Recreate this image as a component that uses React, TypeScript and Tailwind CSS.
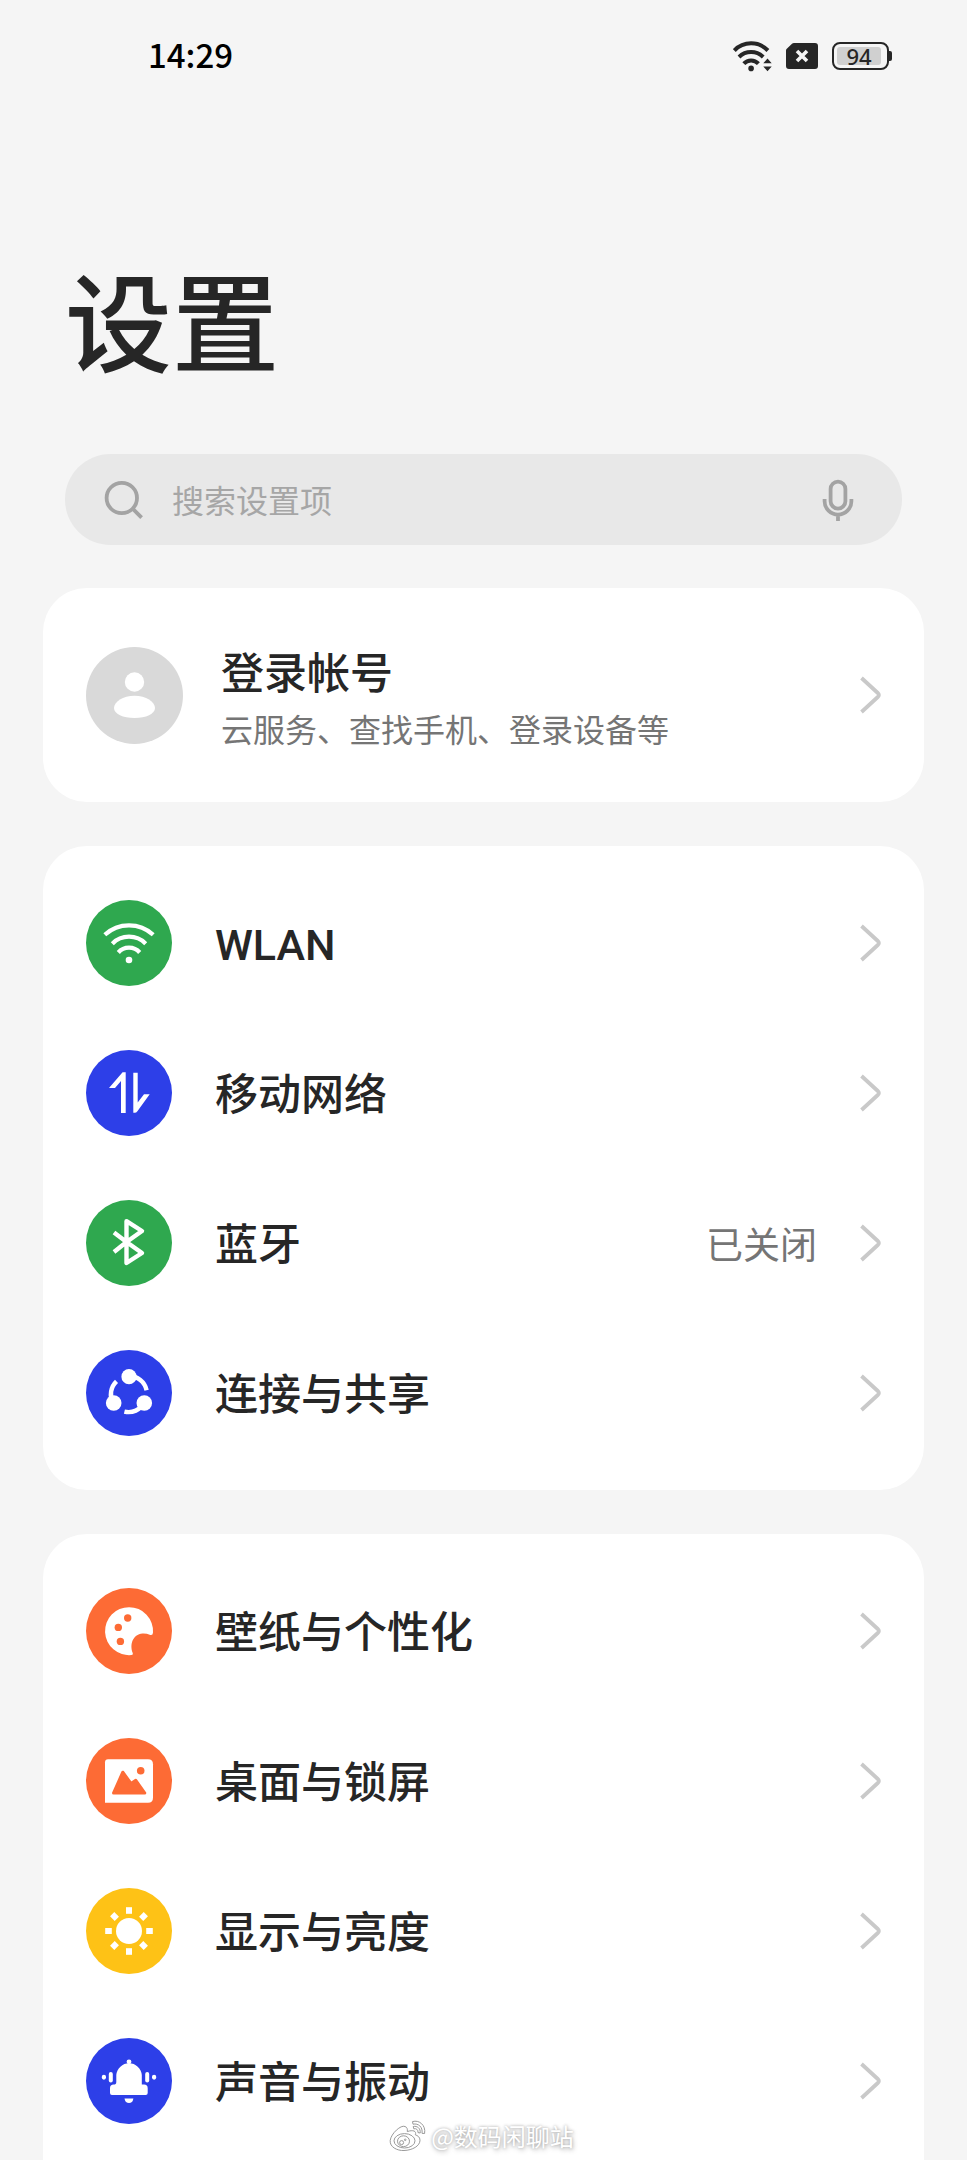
import React from 'react';

interface SettingItem {
    label: string;
    color: string;
    icon: React.ReactNode;
    value?: string;
}

const WifiIcon = () => (
    <g fill="none" stroke="#fff" strokeWidth="4.2">
        <path d="M18.8 34.8A35.8 35.8 0 0 1 67.2 34.8" />
        <path d="M26.3 43.7A23.4 23.4 0 0 1 59.7 43.7" />
        <path d="M32.3 52.5A14.3 14.3 0 0 1 53.7 52.5" />
        <circle cx="43" cy="60" r="3.3" fill="#fff" stroke="none" />
    </g>
);

const MobileDataIcon = () => (
    <g fill="#fff">
        <path d="M36.6 22.3H39.7V63H35V31L29 38H23Z" />
        <path d="M47.3 22.7H51.7V52.5L58 44.3H63.7L51.4 61.2Q50.2 62.7 48.8 62.7H47.3Z" />
    </g>
);

const BluetoothIcon = () => (
    <path
        d="M28 32.5L40.5 42L56 53L40.5 63V21.2L56 31L40.5 42L28 52"
        fill="none"
        stroke="#fff"
        strokeWidth="4.4"
        strokeLinejoin="round"
    />
);

const ShareIcon = () => (
    <g fill="none" stroke="#fff" strokeWidth="4.4">
        <path d="M43 26A18 18 0 0 1 60.6 40.2" />
        <path d="M27 53A18 18 0 0 1 30.5 31.4" />
        <path d="M58.3 53A18 18 0 0 1 38.4 61.6" />
        <g fill="#fff" stroke="none">
            <circle cx="43" cy="26.7" r="7.6" />
            <circle cx="27.7" cy="53" r="7.8" />
            <circle cx="58.3" cy="53" r="7.8" />
        </g>
    </g>
);

const PaletteIcon = () => (
    <g>
        <path
            d="M67 44.5A24 24 0 1 0 45.5 67Q47.4 66.8 46.8 65.3C43.5 57 46.5 46.4 56.5 45.6Q60 45.3 64.4 47Q66.8 47.6 67 44.5Z"
            fill="#fff"
        />
        <g fill="#fd6b35">
            <circle cx="41.7" cy="30" r="3.7" />
            <circle cx="32.3" cy="39.4" r="3.7" />
            <circle cx="34.4" cy="53.4" r="3.7" />
        </g>
    </g>
);

const PictureIcon = () => (
    <g>
        <path d="M22 21.3H62Q67 21.3 67 26.3V59.7Q67 64.7 62 64.7H19V24.3Q19 21.3 22 21.3Z" fill="#fff" />
        <path
            d="M27.5 55L36.8 34.2L45 45.5L49.8 42.3L58.8 55Z"
            fill="#fd6b35"
            stroke="#fd6b35"
            strokeWidth="3"
            strokeLinejoin="round"
        />
        <circle cx="54.7" cy="32.8" r="3.8" fill="#fd6b35" />
    </g>
);

const BrightnessIcon = () => (
    <g fill="#fff">
        <circle cx="43" cy="43" r="13" />
        {[0, 45, 90, 135, 180, 225, 270, 315].map((angle) => (
            <rect key={angle} x="40" y="19.2" width="6" height="6.6" transform={`rotate(${angle} 43 43)`} />
        ))}
    </g>
);

const BellIcon = () => (
    <g fill="#fff">
        <circle cx="43" cy="23.8" r="2.4" />
        <path d="M30.3 37A12.8 12.8 0 0 1 55.8 37V46.6H58Q61.7 46.6 61.7 50.3V55Q61.7 57 59.7 57H26Q24 57 24 55V50.3Q24 46.6 27.7 46.6Q30.3 46.6 30.3 44Z" />
        <path d="M38.5 60.4H47.4Q46.6 65 43 65Q39.4 65 38.5 60.4Z" />
        <rect x="22.8" y="34" width="4" height="10.4" rx="2" />
        <rect x="59.2" y="34" width="4" height="10.4" rx="2" />
        <rect x="15.8" y="36.7" width="4.2" height="5" rx="2.1" />
        <rect x="66" y="36.7" width="4.2" height="5" rx="2.1" />
    </g>
);

const networkItems: SettingItem[] = [
    { label: 'WLAN', color: '#2fa84f', icon: <WifiIcon /> },
    { label: '移动网络', color: '#2d3fe8', icon: <MobileDataIcon /> },
    { label: '蓝牙', color: '#2fa84f', icon: <BluetoothIcon />, value: '已关闭' },
    { label: '连接与共享', color: '#2d3fe8', icon: <ShareIcon /> },
];

const deviceItems: SettingItem[] = [
    { label: '壁纸与个性化', color: '#fd6b35', icon: <PaletteIcon /> },
    { label: '桌面与锁屏', color: '#fd6b35', icon: <PictureIcon /> },
    { label: '显示与亮度', color: '#fec216', icon: <BrightnessIcon /> },
    { label: '声音与振动', color: '#2d3fe8', icon: <BellIcon /> },
];

function Chevron() {
    return (
        <svg width="21" height="38" viewBox="0 0 21 38" fill="none" className="shrink-0">
            <path d="M1.5 2L17.8 17Q20 19 17.8 21L1.5 36" stroke="#c9c9c9" strokeWidth="3.8" />
        </svg>
    );
}

function SettingRow({ item }: { item: SettingItem }) {
    return (
        <li>
            <a href="#" className="flex h-[150px] items-center gap-[43px] px-[43px]">
                <svg width="86" height="86" viewBox="0 0 86 86" className="shrink-0">
                    <circle cx="43" cy="43" r="43" fill={item.color} />
                    {item.icon}
                </svg>
                <span className="flex-1 pt-1 font-['Roboto','Noto_Sans_CJK_SC',sans-serif] text-[43px] font-medium">
                    {item.label}
                </span>
                {item.value && <span className="pt-0.5 text-[37px] text-[#757575]">{item.value}</span>}
                <Chevron />
            </a>
        </li>
    );
}

function StatusBar() {
    return (
        <div className="flex h-28 items-center justify-between pr-[75px] pl-[148px]">
            <time className="pb-1 text-[33px] leading-none font-medium text-black">14:29</time>
            <div className="flex items-center gap-3.5">
                {/* Wifi with traffic arrows */}
                <svg width="39" height="31" viewBox="0 0 39 31" fill="none">
                    <g stroke="#262626" strokeWidth="4">
                        <path d="M1.3 9.5A23.2 23.2 0 0 1 34.9 9.5" />
                        <path d="M6 16A17.4 17.4 0 0 1 30.2 16" />
                        <path d="M10.8 22.6A10 10 0 0 1 25.4 22.6" />
                    </g>
                    <circle cx="18.1" cy="27.4" r="2.8" fill="#262626" />
                    <path d="M30.3 22.3H38.7L34.5 17.6ZM30.3 25.4H38.7L34.5 30.2Z" fill="#262626" />
                </svg>
                {/* No SIM */}
                <svg width="32" height="26" viewBox="0 0 32 26" fill="none">
                    <path
                        d="M8 0H29Q32 0 32 3V23Q32 26 29 26H3Q0 26 0 23V7.5Q0 6.6 .8 5.8L6 .8Q6.8 0 8 0Z"
                        fill="#262626"
                    />
                    <path d="M11 8L21 18M21 8L11 18" stroke="#f5f5f5" strokeWidth="3.6" />
                </svg>
                {/* Battery */}
                <div className="flex items-center">
                    <div className="flex h-7 w-[57px] rounded-[8px] border-2 border-[#262626] p-[3px]">
                        <div className="flex w-11 items-center justify-center rounded-[3px] bg-[#d0d0d0] font-['Noto_Sans',sans-serif] text-[22px] leading-none font-medium text-[#262626]">
                            94
                        </div>
                    </div>
                    <div className="h-2.5 w-[3px] rounded-r-[2px] bg-[#262626]" />
                </div>
            </div>
        </div>
    );
}

function SearchBar() {
    return (
        <form
            role="search"
            className="mx-[22px] flex h-[91px] items-center rounded-full bg-[#e8e8e8] pr-[48px] pl-[39px]"
        >
            <svg width="40" height="40" viewBox="0 0 40 40" fill="none" stroke="#a3a3a3" strokeWidth="3.8">
                <circle cx="17.8" cy="18" r="15.2" />
                <path d="M28.4 28.4L37.6 37.6" />
            </svg>
            <input
                type="search"
                aria-label="搜索设置项"
                placeholder="搜索设置项"
                className="ml-7 min-w-0 flex-1 bg-transparent pb-0.5 text-[32px] outline-none placeholder:text-[#a6a6a6]"
            />
            <button type="button" aria-label="语音搜索">
                <svg width="32" height="42" viewBox="0 0 32 42" fill="none" stroke="#a3a3a3" strokeWidth="3.8">
                    <rect x="8.6" y="2.6" width="14.8" height="27" rx="7.4" />
                    <path d="M2.6 20V22.2A13.4 13.4 0 0 0 29.4 22.2V20M16 35.5V42" />
                </svg>
            </button>
        </form>
    );
}

function Watermark() {
    return (
        <div className="pointer-events-none absolute inset-x-0 bottom-2 flex items-center justify-center gap-1 pr-1">
            <svg width="38" height="32" viewBox="0 0 38 32" fill="#fff" stroke="#9a9a9a" strokeWidth="1">
                <path d="M16 6.5C12 4.5 2 13.5 1.2 20.5C.6 27 8 30.8 15 30.5C23.5 30.2 31 26 31 20.2C31 17 28.5 15.5 26.3 14.8C27.8 11 24 9.6 18.3 11.6C18.6 9 18.2 7.3 16 6.5Z" />
                <ellipse cx="15.5" cy="20.8" rx="10.5" ry="7.2" />
                <ellipse cx="14.5" cy="21.2" rx="6" ry="5.4" />
                <circle cx="12.6" cy="22.6" r="2" />
                <circle cx="16.2" cy="19.8" r=".8" />
                <path d="M23.5 1.6C30 -.4 37 5 35.6 13.5L33 13.3C34 7 29.3 3 24 4.2Z" />
                <path d="M24.2 6.5C28.3 5.6 31.8 8.5 31.2 13L29 12.6C29.3 9.7 27.3 8.2 24.8 8.8Z" />
            </svg>
            <span className="text-[24px] leading-8 text-white [text-shadow:0_0_3px_#aaa,1px_2px_5px_#bbb]">
                @数码闲聊站
            </span>
        </div>
    );
}

export default function App() {
    return (
        <div className="relative flex min-h-screen flex-col bg-[#f5f5f5] font-['Noto_Sans_CJK_SC',sans-serif] text-[#262626]">
            <StatusBar />

            <main className="flex flex-1 flex-col px-[43px]">
                <h1 className="mt-[152px] mb-[82px] ml-[22px] text-[107px] leading-[108px] font-medium">设置</h1>

                <SearchBar />

                {/* Account */}
                <a
                    href="#"
                    className="mt-[43px] flex h-[214px] items-center gap-[38px] rounded-[44px] bg-white px-[43px]"
                >
                    <svg width="97" height="97" viewBox="0 0 97 97" className="shrink-0">
                        <circle cx="48.5" cy="48.5" r="48.5" fill="#d9d9d9" />
                        <circle cx="48.5" cy="35" r="9.7" fill="#fff" />
                        <path d="M28 61C28 55 37 48.8 48.5 48.8S69 55 69 61C69 67 60 71 48.5 71S28 67 28 61Z" fill="#fff" />
                    </svg>
                    <div className="flex-1 pt-1">
                        <h2 className="text-[43px] leading-[62px] font-medium">登录帐号</h2>
                        <p className="text-[32px] leading-[54px] text-[#757575]">云服务、查找手机、登录设备等</p>
                    </div>
                    <Chevron />
                </a>

                <ul className="mt-11 rounded-[44px] bg-white py-[22px]">
                    {networkItems.map((item) => (
                        <SettingRow key={item.label} item={item} />
                    ))}
                </ul>

                {/* Last group runs down to the bottom edge */}
                <ul className="mt-11 flex-1 rounded-t-[44px] bg-white pt-[22px]">
                    {deviceItems.map((item) => (
                        <SettingRow key={item.label} item={item} />
                    ))}
                </ul>
            </main>

            <Watermark />
        </div>
    );
}
